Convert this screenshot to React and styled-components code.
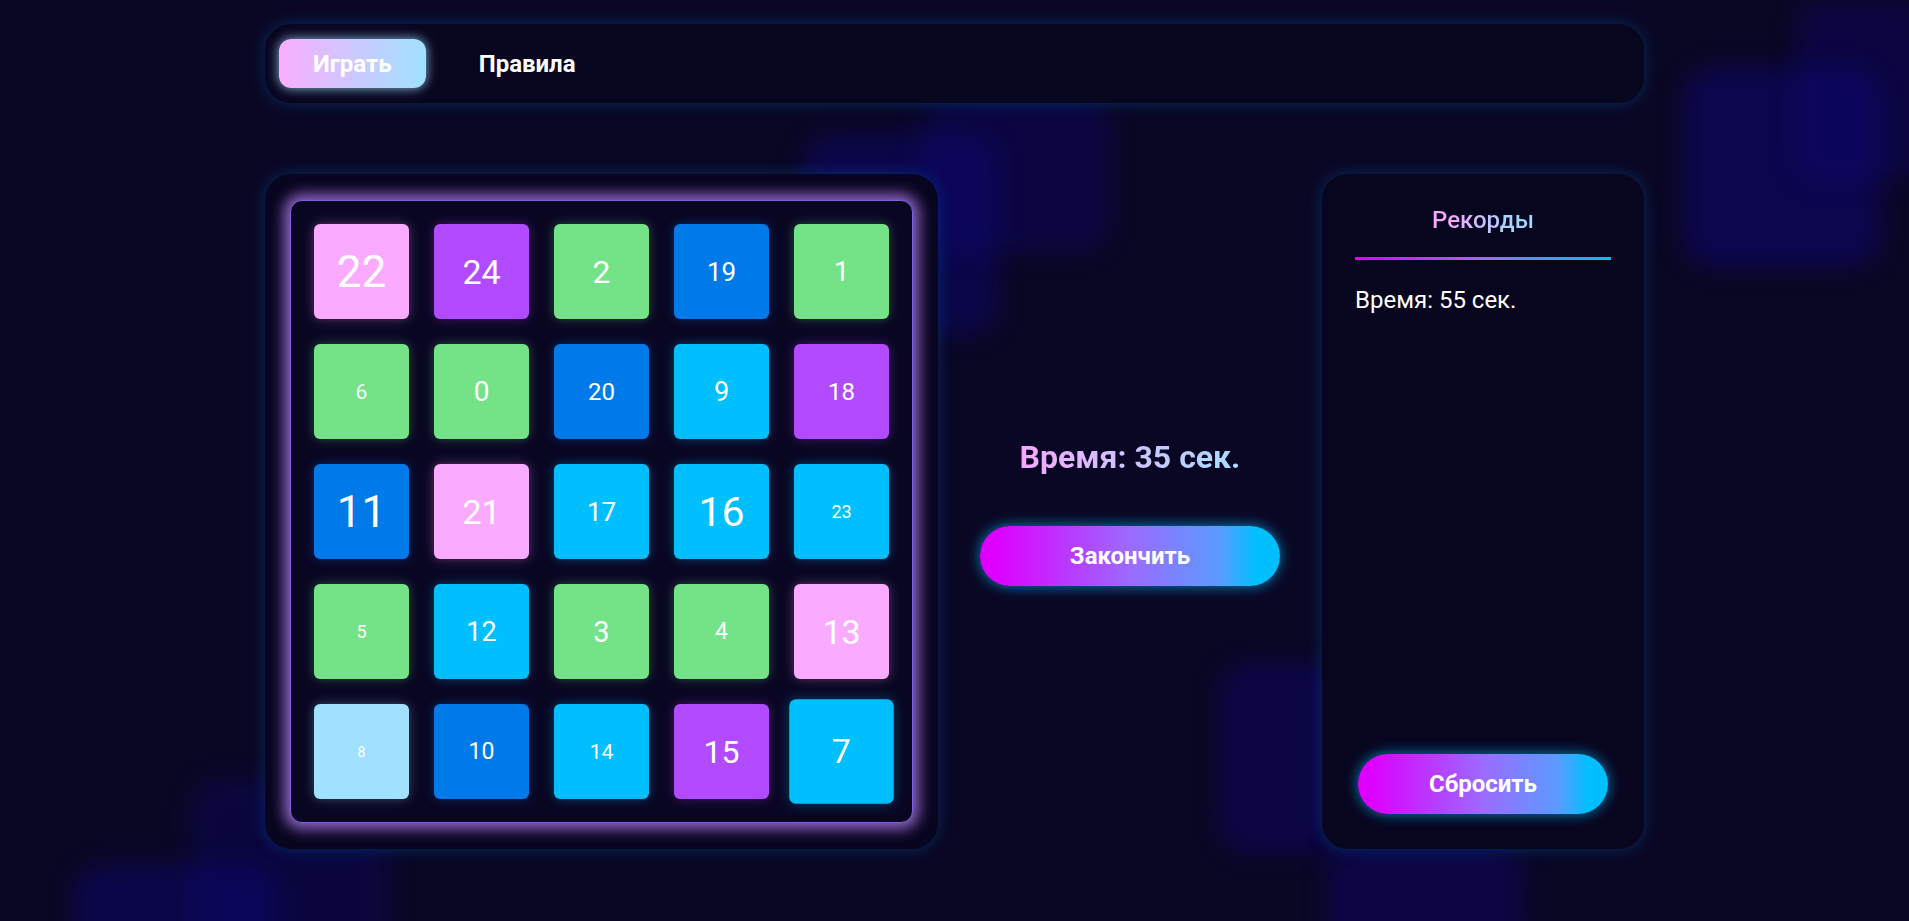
import * as React from "react";
import styled, { createGlobalStyle } from "styled-components";

const GlobalStyle = createGlobalStyle`
    html, body {
        margin: 0;
        padding: 0;
        background: #0a0724;
        font-family: Roboto, "Liberation Sans", sans-serif;
        color: #fff;
    }
    * {
        box-sizing: border-box;
    }
`;

const COLORS = {
    pink: "#fbabff",
    purple: "#b24bff",
    green: "#74e286",
    blue: "#007ae8",
    cyan: "#00bfff",
    sky: "#9fe1ff",
};

// number, colour, font size
const TILES = [
    [22, "pink", 44], [24, "purple", 34], [2, "green", 32], [19, "blue", 26], [1, "green", 27],
    [6, "green", 21], [0, "green", 28], [20, "blue", 24], [9, "cyan", 27], [18, "purple", 24],
    [11, "blue", 44], [21, "pink", 34], [17, "cyan", 26], [16, "cyan", 41], [23, "cyan", 18],
    [5, "green", 18], [12, "cyan", 27], [3, "green", 29], [4, "green", 23], [13, "pink", 34],
    [8, "sky", 14], [10, "blue", 23], [14, "cyan", 21], [15, "purple", 32], [7, "cyan", 31],
];

// blurred squares in the background
const BLOBS = [
    { x: 803, y: 134, w: 195, h: 200, a: 0.45 },
    { x: 920, y: 97, w: 190, h: 155, a: 0.35 },
    { x: 1683, y: 67, w: 197, h: 200, a: 0.5 },
    { x: 1795, y: 0, w: 130, h: 180, a: 0.35 },
    { x: 1218, y: 663, w: 125, h: 190, a: 0.4 },
    { x: 189, y: 779, w: 200, h: 180, a: 0.3 },
    { x: 73, y: 864, w: 205, h: 120, a: 0.45 },
    { x: 1327, y: 840, w: 195, h: 120, a: 0.4 },
];

const App = () => {
    const [tab, setTab] = React.useState("play");

    return (
        <React.Fragment>
            <GlobalStyle />
            <Page>
                {BLOBS.map((b, i) => (
                    <Blob
                        key={i}
                        style={{
                            left: b.x,
                            top: b.y,
                            width: b.w,
                            height: b.h,
                            background: `rgba(14, 6, 120, ${b.a})`,
                        }}
                    />
                ))}

                <Container>
                    {/* top navigation */}
                    <Nav>
                        <TabButton $active={tab === "play"} onClick={() => setTab("play")}>
                            Играть
                        </TabButton>
                        <TabButton $active={tab === "rules"} onClick={() => setTab("rules")}>
                            Правила
                        </TabButton>
                    </Nav>

                    <Main>
                        {/* game board */}
                        <BoardPanel>
                            <Board>
                                {TILES.map(([n, color, size], i) => (
                                    <Tile
                                        key={n}
                                        $color={COLORS[color]}
                                        $size={size}
                                        $hover={i === TILES.length - 1}
                                    >
                                        {n}
                                    </Tile>
                                ))}
                            </Board>
                        </BoardPanel>

                        {/* timer */}
                        <Center>
                            <Timer>Время: 35 сек.</Timer>
                            <GlowButton $width={300}>Закончить</GlowButton>
                        </Center>

                        {/* records */}
                        <RecordsPanel>
                            <RecordsTitle>Рекорды</RecordsTitle>
                            <Divider />
                            <RecordItem>Время: 55 сек.</RecordItem>
                            <GlowButton $width={250} className="reset">
                                Сбросить
                            </GlowButton>
                        </RecordsPanel>
                    </Main>
                </Container>
            </Page>
        </React.Fragment>
    );
};

export default App;

const Page = styled.div`
    position: relative;
    min-height: 921px;
    overflow: hidden;
    padding-top: 24px;
`;

const Blob = styled.div`
    position: absolute;
    z-index: 0;
    border-radius: 30px;
    filter: blur(12px);
`;

const Container = styled.div`
    position: relative;
    z-index: 1;
    width: 1379px;
    margin: 0 auto;
`;

const Nav = styled.nav`
    height: 79px;
    display: flex;
    align-items: center;
    gap: 19px;
    padding: 0 14px;
    border-radius: 26px;
    background: #08051f;
    box-shadow: 0 0 16px rgba(0, 150, 255, 0.25);
`;

const TabButton = styled.button`
    height: 49px;
    padding: 0 34px;
    border: none;
    border-radius: 12px;
    font-family: Roboto, "Liberation Sans", sans-serif;
    font-size: 24px;
    font-weight: 700;
    color: #fff;
    cursor: pointer;
    background: ${(p) =>
        p.$active ? "linear-gradient(90deg, #fbaeff 0%, #9fe2ff 100%)" : "transparent"};
    box-shadow: ${(p) =>
        p.$active ? "0 0 12px rgba(160, 225, 255, 0.85)" : "none"};
`;

const Main = styled.div`
    display: flex;
    justify-content: space-between;
    margin-top: 71px;
    height: 675px;
`;

const BoardPanel = styled.div`
    width: 673px;
    height: 675px;
    padding: 26px 25px;
    border-radius: 26px;
    background: #08051f;
    box-shadow: 0 0 16px rgba(0, 150, 255, 0.25);
`;

const Board = styled.div`
    width: 623px;
    height: 623px;
    display: grid;
    grid-template-columns: repeat(5, 95px);
    grid-auto-rows: 95px;
    gap: 25px;
    padding: 23px;
    border: 1px solid #7a62e0;
    border-radius: 12px;
    background: #090622;
    box-shadow: 0 0 14px 6px rgba(165, 115, 225, 0.85);
`;

const Tile = styled.div`
    display: flex;
    align-items: center;
    justify-content: center;
    border-radius: 6px;
    background: ${(p) => p.$color};
    color: #fff;
    font-size: ${(p) => p.$size}px;
    font-weight: 400;
    box-shadow: 0 0 12px ${(p) => p.$color}50;
    transform: ${(p) => (p.$hover ? "scale(1.1)" : "none")};
    cursor: pointer;
`;

const Center = styled.div`
    flex: 1;
    display: flex;
    flex-direction: column;
    align-items: center;
    justify-content: center;
    gap: 50px;
`;

const Timer = styled.div`
    font-size: 32px;
    font-weight: 700;
    background: linear-gradient(90deg, #f5a8ff 0%, #a9dcff 100%);
    -webkit-background-clip: text;
    background-clip: text;
    color: transparent;
`;

const GlowButton = styled.button`
    width: ${(p) => p.$width}px;
    height: 60px;
    border: none;
    border-radius: 30px;
    font-family: Roboto, "Liberation Sans", sans-serif;
    font-size: 24px;
    font-weight: 700;
    color: #fff;
    cursor: pointer;
    background: linear-gradient(90deg, #dd00ff 5%, #9b6bff 50%, #5b9bff 80%, #00bfff 92%);
    box-shadow: 0 0 14px rgba(0, 190, 255, 0.7);

    &.reset {
        margin: auto auto 0;
    }
`;

const RecordsPanel = styled.div`
    width: 322px;
    height: 675px;
    display: flex;
    flex-direction: column;
    padding: 32px 33px 35px;
    border-radius: 26px;
    background: #08051f;
    box-shadow: 0 0 16px rgba(0, 150, 255, 0.25);
`;

const RecordsTitle = styled.h2`
    margin: 0;
    text-align: center;
    font-size: 24px;
    font-weight: 500;
    line-height: 28px;
    background: linear-gradient(90deg, #f6a8ff 20%, #9fd8ff 80%);
    -webkit-background-clip: text;
    background-clip: text;
    color: transparent;
    align-self: center;
`;

const Divider = styled.div`
    height: 3px;
    margin-top: 23px;
    background: linear-gradient(90deg, #dd00ff 0%, #9b6bff 50%, #00bfff 100%);
`;

const RecordItem = styled.div`
    margin-top: 26px;
    font-size: 24px;
    color: #fff;
`;
